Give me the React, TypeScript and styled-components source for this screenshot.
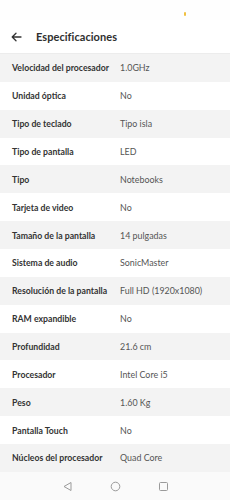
import React from "react";
import styled, { createGlobalStyle } from "styled-components";

const Global = createGlobalStyle`
  html, body { margin: 0; padding: 0; background: #ffffff; }
  body { font-family: Lato, "Open Sans", sans-serif; }
`;

const Screen = styled.div`
  width: 230px;
  height: 500px;
  display: flex;
  flex-direction: column;
  background: #ffffff;
  overflow: hidden;
`;

const StatusBar = styled.div`
  height: 20px;
  position: relative;
  background: #fefefe;
`;

const Dot = styled.span`
  position: absolute;
  left: 184px;
  top: 12px;
  width: 2px;
  height: 4px;
  border-radius: 1px;
  background: #f0c040;
`;

const Header = styled.header`
  height: 34px;
  display: flex;
  align-items: center;
  gap: 14px;
  padding: 0 0 0 11px;
  box-sizing: border-box;
  border-bottom: 1px solid #ececec;
`;

const BackButton = styled.span`
  display: flex;
  width: 11px;
  height: 10px;
  color: #333;
`;

const Title = styled.h1`
  margin: 0;
  font-size: 11px;
  font-weight: 700;
  color: #2e2e2e;
  letter-spacing: 0.05px;
`;

const List = styled.div`
  display: flex;
  flex-direction: column;
`;

const Row = styled.div<{ $shade: boolean }>`
  height: 27.87px;
  display: grid;
  grid-template-columns: 108px 1fr;
  align-items: center;
  padding-left: 12px;
  background: ${(p) => (p.$shade ? "#f3f3f3" : "#ffffff")};
`;

const Label = styled.span`
  font-size: 8.7px;
  font-weight: 700;
  color: #333333;
  white-space: nowrap;
`;

const Value = styled.span`
  font-size: 8.9px;
  color: #555555;
  white-space: nowrap;
`;

const NavBar = styled.nav`
  flex: 1;
  display: flex;
  align-items: center;
  justify-content: center;
  gap: 37px;
  background: #fafafa;
  padding-top: 2px;
`;

const NavIcon = styled.svg`
  width: 11px;
  height: 11px;
  display: block;
`;

const specs: [string, string][] = [
  ["Velocidad del procesador", "1.0GHz"],
  ["Unidad óptica", "No"],
  ["Tipo de teclado", "Tipo isla"],
  ["Tipo de pantalla", "LED"],
  ["Tipo", "Notebooks"],
  ["Tarjeta de video", "No"],
  ["Tamaño de la pantalla", "14 pulgadas"],
  ["Sistema de audio", "SonicMaster"],
  ["Resolución de la pantalla", "Full HD (1920x1080)"],
  ["RAM expandible", "No"],
  ["Profundidad", "21.6 cm"],
  ["Procesador", "Intel Core i5"],
  ["Peso", "1.60 Kg"],
  ["Pantalla Touch", "No"],
  ["Núcleos del procesador", "Quad Core"],
];

export default function App() {
  return (
    <>
      <Global />
      <Screen>
        <StatusBar>
          <Dot />
        </StatusBar>
        <Header>
          <BackButton>
            <svg width="11" height="10" viewBox="0 0 11 10" fill="none" stroke="#333" strokeWidth="1.3" strokeLinecap="round" strokeLinejoin="round">
              <path d="M10 5H1.2M5 1.2L1.2 5L5 8.8" />
            </svg>
          </BackButton>
          <Title>Especificaciones</Title>
        </Header>
        <List>
          {specs.map(([k, v], i) => (
            <Row key={k} $shade={i % 2 === 0}>
              <Label>{k}</Label>
              <Value>{v}</Value>
            </Row>
          ))}
        </List>
        <NavBar>
          <NavIcon viewBox="0 0 11 11" fill="none" stroke="#9a9a9a" strokeWidth="1" strokeLinejoin="round">
            <path d="M9 1.5V9.5L2 5.5Z" />
          </NavIcon>
          <NavIcon viewBox="0 0 11 11" fill="none" stroke="#9a9a9a" strokeWidth="1">
            <circle cx="5.5" cy="5.5" r="4.3" />
          </NavIcon>
          <NavIcon viewBox="0 0 11 11" fill="none" stroke="#9a9a9a" strokeWidth="1">
            <rect x="1.5" y="1.5" width="8" height="8" rx="1" />
          </NavIcon>
        </NavBar>
      </Screen>
    </>
  );
}
